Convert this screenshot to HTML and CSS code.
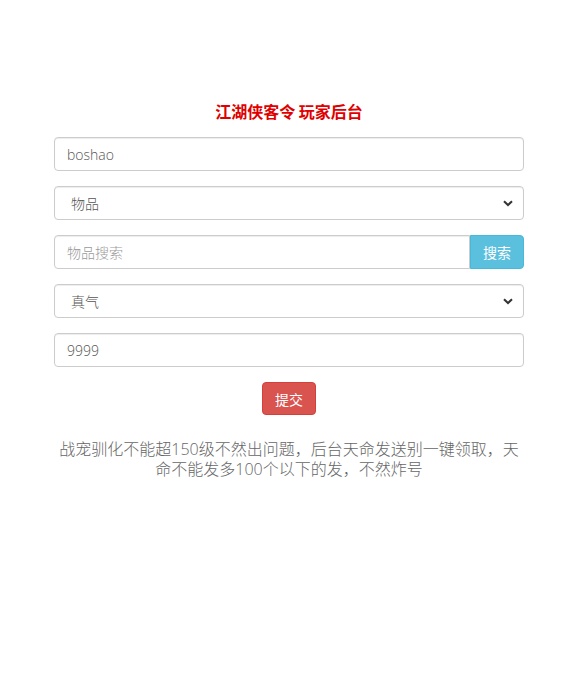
FILE: index.html
```html
<!DOCTYPE html>
<html lang="zh-CN">
<head>
<meta charset="utf-8">
<title>江湖侠客令 玩家后台</title>
<link rel="stylesheet" href="styles.css">
</head>
<body>
<main class="panel">
  <h3 class="title">江湖侠客令 玩家后台</h3>
  <form class="form">
    <input class="field" type="text" value="boshao">
    <div class="select-wrap">
      <select class="field select">
        <option>物品</option>
      </select>
      <svg class="chev" width="10" height="7" viewBox="0 0 10 7"><path d="M1 1.2 L5 5 L9 1.2" fill="none" stroke="#333" stroke-width="2"/></svg>
    </div>
    <div class="group">
      <input class="field group-input" type="text" placeholder="物品搜索">
      <button type="button" class="btn btn-info">搜索</button>
    </div>
    <div class="select-wrap">
      <select class="field select">
        <option>真气</option>
      </select>
      <svg class="chev" width="10" height="7" viewBox="0 0 10 7"><path d="M1 1.2 L5 5 L9 1.2" fill="none" stroke="#333" stroke-width="2"/></svg>
    </div>
    <input class="field" type="text" value="9999">
    <div class="actions">
      <button type="button" class="btn btn-danger">提交</button>
    </div>
  </form>
  <p class="note">战宠驯化不能超150级不然出问题，后台天命发送别一键领取，天命不能发多100个以下的发，不然炸号</p>
</main>
</body>
</html>
```
FILE: styles.css
```css
* { box-sizing: border-box; }
body {
  margin: 0;
  background: #fff;
  font-family: "Open Sans", "Noto Sans CJK SC", sans-serif;
  color: #555;
}
.panel {
  width: 470px;
  margin: 0 0 0 54px;
  padding-top: 101px;
}
.title {
  margin: 0 0 16px;
  text-align: center;
  font-size: 16px;
  line-height: 20px;
  font-weight: bold;
  color: #e00000;
  font-family: "Noto Sans CJK SC", sans-serif;
}
.form {
  display: flex;
  flex-direction: column;
  gap: 15px;
}
.field {
  display: block;
  width: 100%;
  height: 34px;
  padding: 6px 12px;
  font-size: 14px;
  font-weight: 300;
  font-family: "Open Sans", "Noto Sans CJK SC", sans-serif;
  color: #555;
  background: #fff;
  border: 1px solid #ccc;
  border-radius: 4px;
  box-shadow: inset 0 1px 1px rgba(0,0,0,.075);
  outline: none;
}
.field::placeholder { color: #999; }
.select-wrap { position: relative; }
.select {
  appearance: none;
  -webkit-appearance: none;
  padding-left: 16px;
}
.chev {
  position: absolute;
  right: 11px;
  top: 14px;
  pointer-events: none;
}
.group { display: flex; }
.group-input {
  flex: 1;
  border-top-right-radius: 0;
  border-bottom-right-radius: 0;
}
.btn {
  height: 34px;
  padding: 6px 12px;
  font-size: 14px;
  font-family: "Noto Sans CJK SC", sans-serif;
  color: #fff;
  border: 1px solid transparent;
  border-radius: 4px;
  line-height: 20px;
}
.btn-info {
  background: #5bc0de;
  border-color: #46b8da;
  border-top-left-radius: 0;
  border-bottom-left-radius: 0;
  width: 54px;
}
.actions {
  display: flex;
  justify-content: center;
}
.btn-danger {
  background: #d9534f;
  border-color: #d43f3a;
  width: 54px;
  height: 33px;
}
.note {
  margin: 24px 0 0;
  text-align: center;
  font-size: 16px;
  line-height: 20px;
  font-weight: 300;
  color: #666;
  font-family: "Open Sans", "Noto Sans CJK SC", sans-serif;
}
```
